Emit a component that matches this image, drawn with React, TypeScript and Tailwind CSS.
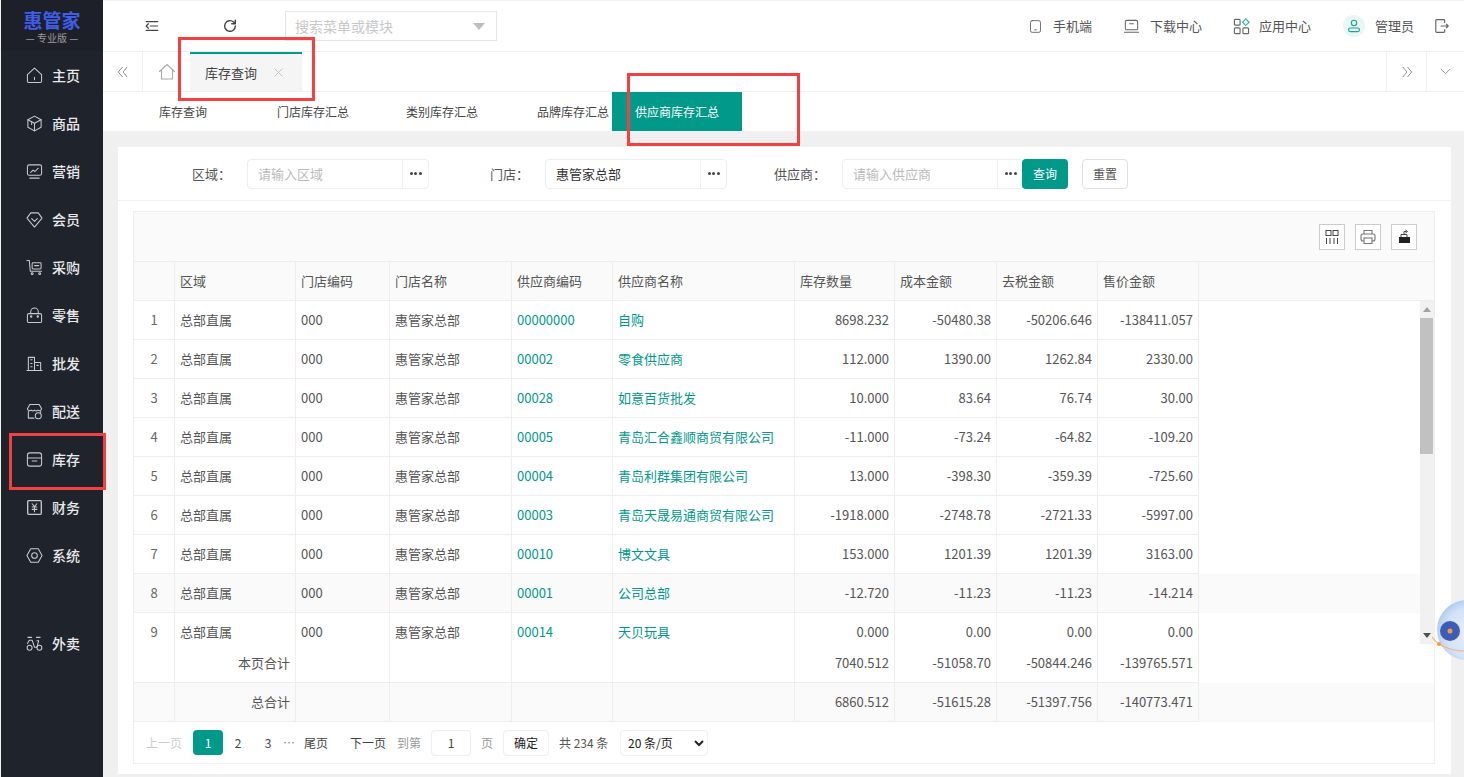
import React from "react";

const FONT = '"Noto Sans CJK SC", "Noto Sans", sans-serif';

function I({ children, size = 18, className = "" }: { children: React.ReactNode; size?: number; className?: string }) {
  return (
    <svg width={size} height={size} viewBox="0 0 18 18" fill="none" stroke="currentColor" strokeWidth="1.1" strokeLinejoin="round" strokeLinecap="round" className={className}>
      {children}
    </svg>
  );
}

const navIcons: Record<string, React.ReactNode> = {
  主页: <><path d="M1.5 8 9 1.2 16.5 8v7.2a1.3 1.3 0 0 1-1.3 1.3H2.8a1.3 1.3 0 0 1-1.3-1.3z" /><path d="M9 11v2.6" /></>,
  商品: <><path d="M9 1.2 16 5v8l-7 3.8L2 13V5z" /><path d="M2 5l7 3.8L16 5M9 8.8v8M6 7v3" /></>,
  营销: <><rect x="1.5" y="2" width="15" height="11" rx="2" /><path d="M5 10l2.5-2.5L9.5 9 13 5.5M4 16h10" /></>,
  会员: <><path d="M5 2h8l4 5.5-8 9.5-8-9.5z" /><path d="M6 8l3 3 3-3" /></>,
  采购: <><path d="M1 1.5h2.5l1 11.5h12" /><rect x="6.5" y="4" width="9.5" height="6.5" rx="1" /><path d="M9 7h4.5" /><circle cx="6.5" cy="15.5" r="1" /><circle cx="14.5" cy="15.5" r="1" /></>,
  零售: <><rect x="1.5" y="7" width="15" height="9.5" rx="1.5" /><path d="M5 7V5a4 4 0 0 1 8 0v2" /><circle cx="5.5" cy="10" r=".7" /><circle cx="12.5" cy="10" r=".7" /></>,
  批发: <><path d="M2.5 16V2.5h6.5V16M9 8h6.5v8M1 16.5h16M5 5h1.5M5 9h1.5M5 12.5h1.5M11.5 11h1.5" /></>,
  配送: <><path d="M4 1.5h10l2.5 4.5a2.4 2.4 0 0 1-4 1.5 2.6 2.6 0 0 1-3.5 0 2.6 2.6 0 0 1-3.5 0 2.4 2.4 0 0 1-4-1.5z" /><path d="M2.5 9v7h6M15.5 9v1" /><circle cx="13" cy="13.5" r="3.2" /></>,
  库存: <><rect x="1.5" y="2" width="15" height="14" rx="2.5" /><path d="M1.5 7.5h15M6.5 10.5h5" /></>,
  财务: <><rect x="1.8" y="1.8" width="14.4" height="14.4" rx="1" strokeWidth="1.4" /><path d="M6.5 5 9 8l2.5-3M6.5 8.5h5M6.5 11h5M9 8v5.5" /></>,
  系统: <><path d="M5 1.8h8L17 9l-4 7.2H5L1 9z" /><circle cx="9" cy="9" r="3" /></>,
  外卖: <><circle cx="3.8" cy="13.5" r="2.6" /><circle cx="14.2" cy="13.5" r="2.6" /><path d="M1.5 9l2-3.5h3L9 13h2.5l2-7h-2M2 2.5h4M11 2.5h4" /></>,
};

const navs = ["主页", "商品", "营销", "会员", "采购", "零售", "批发", "配送", "库存", "财务", "系统"];

function NavItem({ label }: { label: string }) {
  return (
    <div className="h-12 flex items-center pl-[25px] gap-[9px] text-[#e9e9e9]">
      <I size={17} className="text-[#c9cacc]">{navIcons[label]}</I>
      <span className="text-[14px] font-medium leading-none">{label}</span>
    </div>
  );
}

function Sidebar() {
  return (
    <aside className="w-[102px] ml-px shrink-0 bg-[#1f232c] flex flex-col">
      <div className="h-[51px] flex flex-col items-center pt-[10px] bg-[#1d2029]">
        <div className="text-[#3f5ee8] text-[19px] font-bold leading-[20px] tracking-[0px]">惠管家</div>
        <div className="text-[#9a9a9a] text-[10px] leading-[12px] mt-[2px]">— 专业版 —</div>
      </div>
      {navs.map((n) => <NavItem key={n} label={n} />)}
      <div className="h-10" />
      <NavItem label="外卖" />
    </aside>
  );
}

function HeaderLink({ icon, label, className = "" }: { icon: React.ReactNode; label: string; className?: string }) {
  return (
    <div className={`flex items-center text-[13px] text-[#555] ${className}`}>
      {icon}
      <span>{label}</span>
    </div>
  );
}

function Header() {
  return (
    <header className="h-[50px] mt-px bg-white flex items-center shrink-0">
      <div className="w-[182px] pl-[41px] flex items-center text-[#444]">
        <I size={16}><path d="M2.5 4h13M7 9h8.5M2.5 14h13M5 6.5 2.5 9 5 11.5" strokeWidth="1.3" /></I>
        <span className="ml-[62px]">
          <I size={16}><path d="M15 9a6 6 0 1 1-2-4.5L15 6.5M15 2.5v4h-4" strokeWidth="1.6" /></I>
        </span>
      </div>
      <div className="w-[212px] h-[30px] border border-[#e6e6e6] flex items-center justify-between pl-[9px] pr-[11px] text-[14px] text-[#c8c8c8]">
        <span>搜索菜单或模块</span>
        <span className="w-0 h-0 border-x-[6px] border-x-transparent border-t-[7px] border-t-[#bdbdbd]" />
      </div>
      <div className="flex-1" />
      <HeaderLink label="手机端" icon={<I size={15} className="mr-[10px] text-[#666]"><rect x="3" y="2" width="12" height="14" rx="2" /><path d="M8 13h2" /></I>} />
      <HeaderLink className="ml-[31px]" label="下载中心" icon={<I size={17} className="mr-[10px] text-[#666]"><rect x="2.5" y="2.5" width="13" height="10" rx="1.5" /><path d="M1.5 15h15M7 6h4" /></I>} />
      <HeaderLink className="ml-[31px]" label="应用中心" icon={
        <svg width="17" height="17" viewBox="0 0 18 18" fill="none" stroke="#666" strokeWidth="1.2" className="mr-[9px]">
          <rect x="1.5" y="1.5" width="6" height="6" rx="1" />
          <rect x="1.5" y="10.5" width="6" height="6" rx="1" />
          <rect x="10.5" y="10.5" width="6" height="6" rx="1" />
          <path d="M13.5 1 17 4.5 13.5 8 10 4.5z" stroke="#2bb3a3" />
        </svg>
      } />
      <HeaderLink className="ml-[32px]" label="管理员" icon={
        <span className="w-[22px] h-[22px] rounded-full bg-[#e8f6f4] flex items-center justify-center mr-[10px]">
          <svg width="14" height="14" viewBox="0 0 14 14" fill="none" stroke="#1aa594" strokeWidth="1.1">
            <circle cx="7" cy="4" r="2.7" />
            <rect x="1.5" y="9" width="11" height="3.6" rx="1.8" />
          </svg>
        </span>
      } />
      <span className="ml-[20px] mr-[14px] text-[#666] flex">
        <I size={16}><path d="M12 5V2.8a1 1 0 0 0-1-1H3a1 1 0 0 0-1 1v12.4a1 1 0 0 0 1 1h8a1 1 0 0 0 1-1V13M8 9h8M14 7l2 2-2 2" strokeWidth="1.3" /></I>
      </span>
    </header>
  );
}

function TabBar() {
  return (
    <div className="h-[41px] bg-white border-t border-b border-[#eeeeee] flex shrink-0 text-[#777]">
      <div className="w-[40px] border-r border-[#f0f0f0] flex items-center justify-center">
        <I size={14}><path d="M8 3 3 9l5 6M14 3 9 9l5 6" /></I>
      </div>
      <div className="w-[47px] flex items-center justify-center text-[#aaa]">
        <I size={18}><path d="M1.5 8.5 9 1.5l7.5 7M3.5 7v9h11V7" /></I>
      </div>
      <div className="w-[112px] bg-[#f5f5f5] border-t-2 border-[#01998a] flex items-center pl-[15px] text-[13px] text-[#444]">
        <span>库存查询</span>
        <svg width="9" height="9" viewBox="0 0 9 9" stroke="#c4c4c4" strokeWidth="1" className="ml-[17px]"><path d="M.5.5l8 8M8.5.5l-8 8" /></svg>
      </div>
      <div className="flex-1" />
      <div className="w-[40px] border-l border-[#f0f0f0] flex items-center justify-center">
        <I size={14}><path d="M4 3l5 6-5 6M10 3l5 6-5 6" /></I>
      </div>
      <div className="w-[38px] border-l border-[#f0f0f0] flex items-center justify-center">
        <I size={13}><path d="M3 6l6 6 6-6" /></I>
      </div>
    </div>
  );
}

function SubTabs() {
  const items: [string, string][] = [["库存查询", "w-[118px] pl-[56px]"], ["门店库存汇总", "w-[129px] pl-[56px]"], ["类别库存汇总", "w-[131px] pl-[56px]"], ["品牌库存汇总", "w-[101px] pl-[56px]"]];
  return (
    <div className="h-[39px] bg-white flex items-stretch shrink-0 text-[12px] text-[#444]">
      {items.map(([t, c], i) => (
        <div key={t} className={`${c} ${i === 3 ? "w-[132px]" : ""} flex items-center whitespace-nowrap`}>{t}</div>
      ))}
      <div className="w-[130px] bg-[#01998a] text-white flex items-center justify-center -ml-px">供应商库存汇总</div>
    </div>
  );
}

function Dots() {
  return (
    <span className="w-[26px] border-l border-[#eeeeee] flex items-center justify-center gap-[1.5px]">
      <i className="w-[3px] h-[3px] rounded-full bg-[#444]" />
      <i className="w-[3px] h-[3px] rounded-full bg-[#444]" />
      <i className="w-[3px] h-[3px] rounded-full bg-[#444]" />
    </span>
  );
}

function Field({ label, labelW, placeholder, value }: { label: string; labelW: string; placeholder?: string; value?: string }) {
  return (
    <div className="flex items-center">
      <span className={`${labelW} text-right text-[13px] text-[#555] pr-[16px]`}>{label}</span>
      <div className="w-[182px] h-[30px] border border-[#eeeeee] rounded-sm flex">
        <span className={`flex-1 pl-[10px] flex items-center text-[13px] ${value ? "text-[#333]" : "text-[#bbb]"}`}>{value ?? placeholder}</span>
        <Dots />
      </div>
    </div>
  );
}

function SearchRow() {
  return (
    <div className="h-[54px] border-b border-[#f0f0f0] flex items-center">
      <Field label="区域：" labelW="w-[129px]" placeholder="请输入区域" />
      <Field label="门店：" labelW="w-[116px]" value="惠管家总部" />
      <Field label="供应商：" labelW="w-[115px]" placeholder="请输入供应商" />
      <button className="ml-[-2px] w-[46px] h-[30px] bg-[#01998a] rounded-sm text-white text-[12px]">查询</button>
      <button className="ml-[14px] w-[46px] h-[30px] bg-white border border-[#e0e0e0] rounded-sm text-[#555] text-[12px]">重置</button>
    </div>
  );
}

const GRID = "grid grid-cols-[41px_121px_94px_122px_101px_182px_100px_102px_101px_101px]";

const headers = ["", "区域", "门店编码", "门店名称", "供应商编码", "供应商名称", "库存数量", "成本金额", "去税金额", "售价金额"];

const rows: string[][] = [
  ["00000000", "自购", "8698.232", "-50480.38", "-50206.646", "-138411.057"],
  ["00002", "零食供应商", "112.000", "1390.00", "1262.84", "2330.00"],
  ["00028", "如意百货批发", "10.000", "83.64", "76.74", "30.00"],
  ["00005", "青岛汇合鑫顺商贸有限公司", "-11.000", "-73.24", "-64.82", "-109.20"],
  ["00004", "青岛利群集团有限公司", "13.000", "-398.30", "-359.39", "-725.60"],
  ["00003", "青岛天晟易通商贸有限公司", "-1918.000", "-2748.78", "-2721.33", "-5997.00"],
  ["00010", "博文文具", "153.000", "1201.39", "1201.39", "3163.00"],
  ["00001", "公司总部", "-12.720", "-11.23", "-11.23", "-14.214"],
  ["00014", "天贝玩具", "0.000", "0.00", "0.00", "0.00"],
];

const cell = "border-r border-b border-[#eeeeee] flex items-center px-[5px] whitespace-nowrap overflow-hidden";

function ToolBtn({ children }: { children: React.ReactNode }) {
  return <span className="w-[26px] h-[26px] border border-[#cccccc] flex items-center justify-center bg-white">{children}</span>;
}

function Toolbar() {
  return (
    <div className="h-[50px] bg-[#fafafa] border-b border-[#eeeeee] flex items-center justify-end gap-[10px] pr-[17px] shrink-0">
      <ToolBtn>
        <svg width="14" height="14" viewBox="0 0 14 14" fill="none" stroke="#444" strokeWidth="1"><rect x="1" y=".5" width="5" height="5" /><rect x="8" y=".5" width="5" height="5" /><path d="M1.5 8v6M5 8v6M9 8v6M12.5 8v6" /></svg>
      </ToolBtn>
      <ToolBtn>
        <svg width="16" height="16" viewBox="0 0 16 16" fill="none" stroke="#777" strokeWidth="1.1"><path d="M4 5V1.5h8V5" /><rect x="1" y="5" width="14" height="7" rx="2" /><rect x="4" y="9" width="8" height="5.5" fill="#fff" /></svg>
      </ToolBtn>
      <ToolBtn>
        <svg width="15" height="15" viewBox="0 0 15 15"><path d="M2 8h11v6H2z" fill="#222" /><path d="M4 8V5.5h6V8" fill="none" stroke="#444" /><path d="M7 5V2.5h2.5M8.5 1l2 1.5-2 1.5" fill="none" stroke="#444" /></svg>
      </ToolBtn>
    </div>
  );
}

function HeadRow() {
  return (
    <div className="h-[39px] bg-[#fafafa] border-b border-[#eeeeee] flex shrink-0 text-[13px] text-[#555]">
      <div className={`${GRID}`}>
        {headers.map((h, i) => <div key={i} className={`${cell} border-b-0`}>{h}</div>)}
      </div>
    </div>
  );
}

function BodyRows() {
  return (
    <div className="h-[343px] flex overflow-hidden shrink-0 relative">
      <div className="flex-1 overflow-hidden">
        {rows.map((r, i) => (
          <div key={i} className={`${GRID} h-[39px] text-[13px] text-[#555] ${i % 2 === 1 ? "" : ""} ${i === 7 ? "bg-[#fafafa]" : ""}`}>
            <div className={`${cell} justify-center pl-0 pr-0 text-[#666]`}>{i + 1}</div>
            <div className={cell}>总部直属</div>
            <div className={cell}>000</div>
            <div className={cell}>惠管家总部</div>
            <div className={`${cell} text-[#01998a]`}>{r[0]}</div>
            <div className={`${cell} text-[#01998a]`}>{r[1]}</div>
            <div className={`${cell} justify-end`}>{r[2]}</div>
            <div className={`${cell} justify-end`}>{r[3]}</div>
            <div className={`${cell} justify-end`}>{r[4]}</div>
            <div className={`${cell} justify-end`}>{r[5]}</div>
          </div>
        ))}
      </div>
      <div className="w-[14px] bg-[#f1f1f1] flex flex-col shrink-0">
        <div className="h-[17px] flex items-center justify-center">
          <span className="w-0 h-0 border-x-[4px] border-x-transparent border-b-[5px] border-b-[#a3a3a3]" />
        </div>
        <div className="h-[136px] bg-[#c1c1c1] mr-px" />
        <div className="flex-1" />
        <div className="h-[17px] flex items-center justify-center">
          <span className="w-0 h-0 border-x-[4px] border-x-transparent border-t-[5px] border-t-[#505050]" />
        </div>
      </div>
    </div>
  );
}

function FootRow({ label, v, gray }: { label: string; v: string[]; gray?: boolean }) {
  return (
    <div className={`${GRID} h-[39px] text-[13px] text-[#555] ${gray ? "bg-[#fafafa]" : ""}`}>
      <div className={cell} />
      <div className={`${cell} justify-end`}>{label}</div>
      <div className={cell} />
      <div className={cell} />
      <div className={cell} />
      <div className={cell} />
      {v.map((x, i) => <div key={i} className={`${cell} justify-end`}>{x}</div>)}
    </div>
  );
}

function Pager() {
  return (
    <div className="h-[41px] flex items-center text-[12px] text-[#444] pl-[12px]">
      <span className="text-[#ccc] w-[47px]">上一页</span>
      <span className="w-[30px] h-[25px] bg-[#01998a] text-white rounded-sm flex items-center justify-center">1</span>
      <span className="w-[30px] text-center">2</span>
      <span className="w-[30px] text-center">3</span>
      <span className="w-[20px] text-[#888]">…</span>
      <span className="w-[47px] pl-[1px]">尾页</span>
      <span className="w-[47px]">下一页</span>
      <span className="w-[34px] text-[#999]">到第</span>
      <span className="w-[40px] h-[26px] border border-[#eeeeee] rounded-sm flex items-center justify-center text-[#444]">1</span>
      <span className="w-[32px] pl-[10px] text-[#999]">页</span>
      <span className="w-[46px] h-[26px] border border-[#eeeeee] rounded-sm flex items-center justify-center text-[#222]">确定</span>
      <span className="ml-[10px] w-[61px] text-[#555]">共 234 条</span>
      <select className="w-[88px] h-[26px] border border-[#eeeeee] rounded-sm bg-white text-[12px] text-[#222] pl-[3px] outline-none" style={{ fontFamily: FONT }}>
        <option>20 条/页</option>
      </select>
    </div>
  );
}

function Ball() {
  return (
    <div className="absolute left-[1432px] top-[590px] pointer-events-none">
      <svg width="32" height="90" viewBox="0 0 32 90">
        <defs>
          <radialGradient id="bg" cx="55%" cy="55%" r="60%">
            <stop offset="0" stopColor="#e8f0fb" />
            <stop offset=".7" stopColor="#d2e2f8" />
            <stop offset="1" stopColor="#a9c7f0" />
          </radialGradient>
        </defs>
        <circle cx="35" cy="40" r="30" fill="url(#bg)" />
        <circle cx="18" cy="41" r="10" fill="#3d5cb8" />
        <circle cx="18" cy="41" r="2.5" fill="#f59a3b" />
        <path d="M0 47c6 8 18 14 32 14" fill="none" stroke="#f4b477" strokeWidth="1.2" />
        <circle cx="7" cy="54" r="2" fill="#f59a3b" />
      </svg>
    </div>
  );
}

export default function App() {
  return (
    <div className="w-[1464px] h-[777px] relative overflow-hidden flex bg-[#f0f0f0]" style={{ fontFamily: FONT }}>
      <Sidebar />
      <main className="flex-1 flex flex-col min-w-0">
        <Header />
        <TabBar />
        <SubTabs />
        <div className="flex-1 pt-[16px] pl-[15px] pr-[13px] min-h-0">
          <div className="h-[627px] bg-white flex flex-col">
            <SearchRow />
            <div className="mt-[10px] mx-[15px] mr-[16px] h-[553px] border border-[#eeeeee] flex flex-col overflow-hidden">
              <Toolbar />
              <HeadRow />
              <BodyRows />
              <FootRow label="本页合计" v={["7040.512", "-51058.70", "-50844.246", "-139765.571"]} />
              <FootRow label="总合计" gray v={["6860.512", "-51615.28", "-51397.756", "-140773.471"]} />
              <Pager />
            </div>
          </div>
        </div>
      </main>
      <div className="absolute left-[178px] top-[37px] w-[137px] h-[64px] border-[3px] border-[#f44040] pointer-events-none" />
      <div className="absolute left-[627px] top-[73px] w-[173px] h-[73px] border-[3px] border-[#f44040] pointer-events-none" />
      <div className="absolute left-[9px] top-[433px] w-[97px] h-[57px] border-[3px] border-[#f44040] pointer-events-none" />
      <Ball />
    </div>
  );
}
